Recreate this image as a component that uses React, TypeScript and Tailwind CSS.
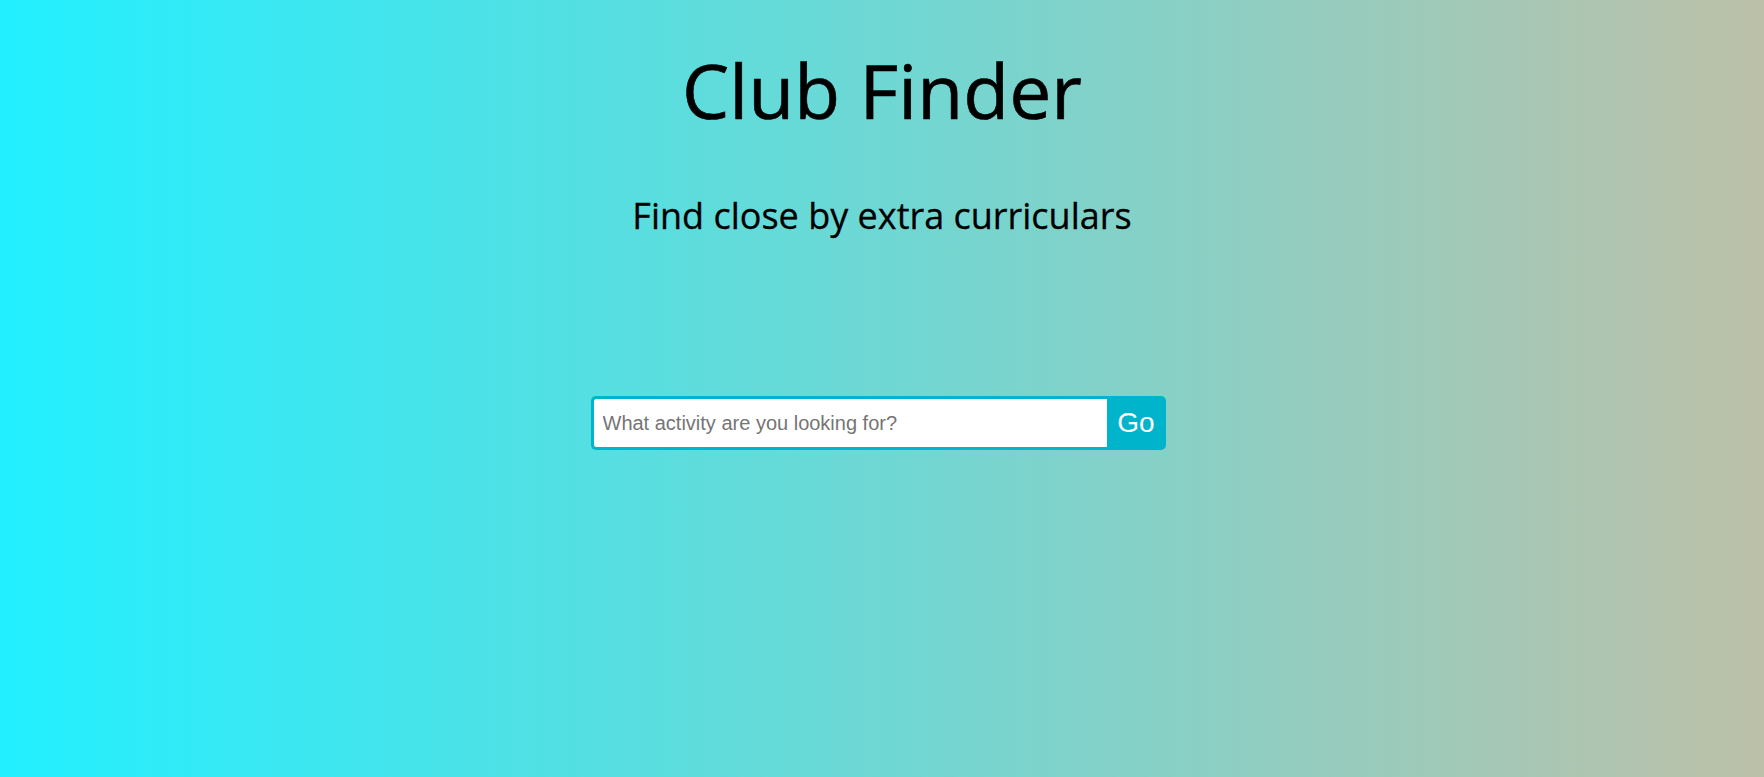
import React, { useState } from 'react';

const App = () => {
	const [query, setQuery] = useState('');

	return (
		<main className="flex min-h-[777px] w-full flex-col items-center bg-[linear-gradient(to_right,#21efff,#bcc0a8)] font-['Open_Sans',sans-serif] text-black">
			<h1 className="mt-[36px] text-[75px] leading-[109px] font-normal [-webkit-text-stroke:0.6px_black]">Club Finder</h1>
			<h2 className="mt-[48px] text-[36px] leading-[46px] font-normal [-webkit-text-stroke:0.3px_black]">Find close by extra curriculars</h2>
			<form
				className="mt-[157px] mr-[8px] flex w-[575px]"
				onSubmit={(e) => e.preventDefault()}
			>
				<input
					type="text"
					value={query}
					onChange={(e) => setQuery(e.target.value)}
					placeholder="What activity are you looking for?"
					className="h-[54px] flex-1 rounded-l-[5px] border-[3px] border-r-0 border-[#00b4cc] bg-white px-[9px] font-['Liberation_Sans',Arial,sans-serif] text-[20px] text-[#333] outline-none placeholder:text-[#757575]"
				/>
				<button
					type="submit"
					className="h-[54px] w-[59px] rounded-r-[5px] bg-[#00b4cc] font-['Liberation_Sans',Arial,sans-serif] text-[28px] text-white"
				>
					Go
				</button>
			</form>
		</main>
	);
};

export default App;
